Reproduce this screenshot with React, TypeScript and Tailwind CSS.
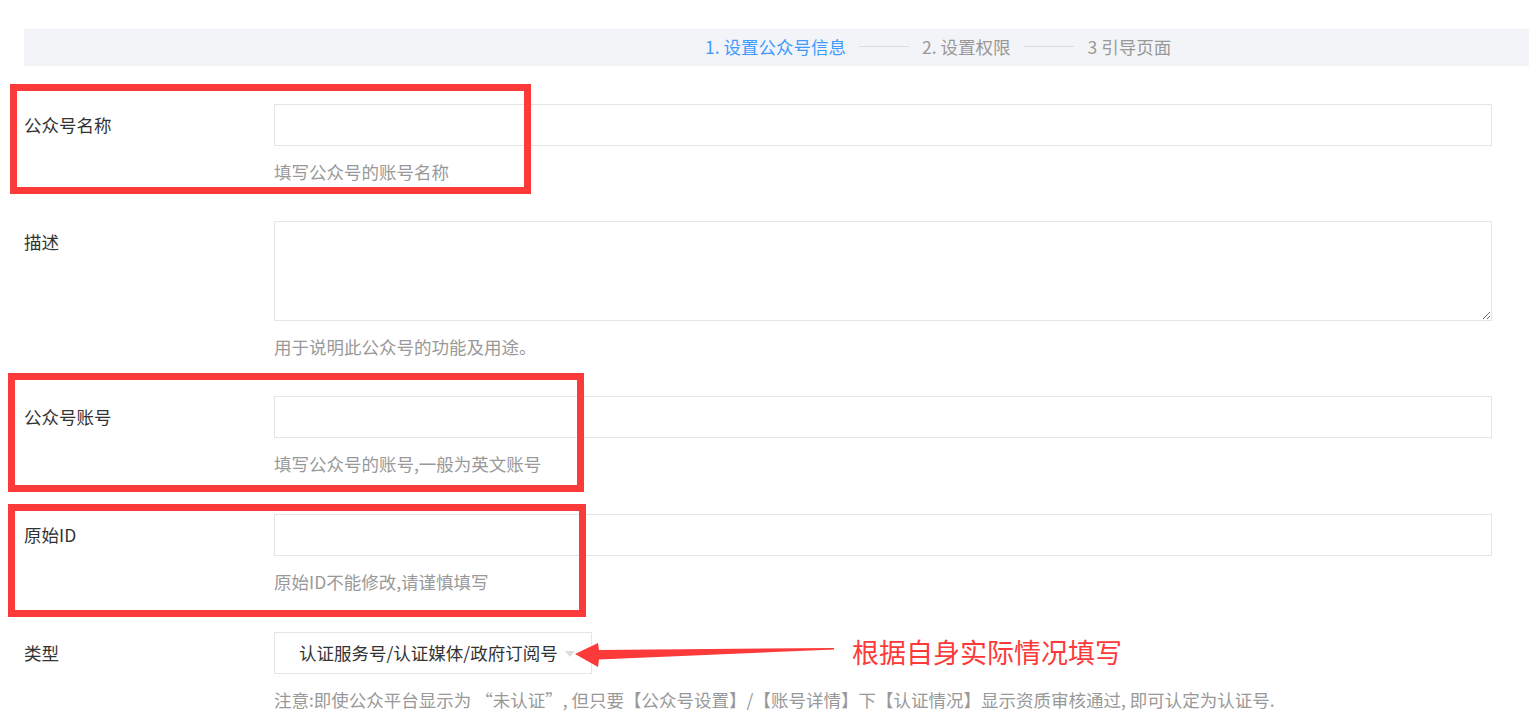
import React from "react"

const fields = [
  { label: "公众号名称", help: "填写公众号的账号名称", gap: "mb-[39px]" },
  { label: "描述", help: "用于说明此公众号的功能及用途。", multiline: true, gap: "mb-[39px]" },
  { label: "公众号账号", help: "填写公众号的账号,一般为英文账号", gap: "mb-[40px]" },
  { label: "原始ID", help: "原始ID不能修改,请谨慎填写", gap: "mb-[40px]" },
]

export default function App() {
  return (
    <div className="relative w-[1529px] h-[724px] overflow-hidden bg-white font-['Noto_Sans_CJK_SC',sans-serif] text-[17.5px]">
      {/* steps */}
      <div className="mt-[29px] ml-[24px] h-[37px] bg-[#f3f4f7] flex items-center pl-[681px] leading-[20px] pb-[2px]">
        <span className="text-[#3e9bff]">1. 设置公众号信息</span>
        <span className="mx-[13px] w-[50px] h-px bg-[#dcdcdc]" />
        <span className="text-[#999]">2. 设置权限</span>
        <span className="ml-[13px] mr-[14px] w-[50px] h-px bg-[#dcdcdc]" />
        <span className="text-[#999]">3 引导页面</span>
      </div>

      {/* form */}
      <div className="mt-[38px] px-[24px]">
        {fields.map((f) => (
          <div key={f.label} className={`flex ${f.gap}`}>
            <div className="w-[250px] leading-[42px] text-[#333]">{f.label}</div>
            <div className="w-[1218px]">
              {f.multiline ? (
                <textarea className="block w-full h-[100px] border border-[#e5e5e5] outline-none" />
              ) : (
                <input className="block w-full h-[42px] border border-[#e5e5e5] outline-none" />
              )}
              <p className="mt-[16px] leading-[20px] text-[#999]">{f.help}</p>
            </div>
          </div>
        ))}

        <div className="flex">
          <div className="w-[250px] leading-[42px] text-[#333]">类型</div>
          <div>
            <div className="flex items-center w-[318px] h-[42px] border border-[#e5e5e5] pl-[24px] text-[#333]">
              <span>认证服务号/认证媒体/政府订阅号</span>
              <span className="ml-[7px] mt-[2px] w-0 h-0 border-l-[5.5px] border-r-[5.5px] border-t-[6px] border-l-transparent border-r-transparent border-t-[#dddddd]" />
            </div>
            <p className="mt-[16px] leading-[20px] text-[#999] whitespace-nowrap">
              注意:即使公众平台显示为 “未认证”, 但只要【公众号设置】/【账号详情】下【认证情况】显示资质审核通过, 即可认定为认证号.
            </p>
          </div>
        </div>
      </div>

      {/* annotations */}
      <div className="absolute left-[10px] top-[84px] w-[521px] h-[110px] border-[7px] border-[#fc3a3a]" />
      <div className="absolute left-[8px] top-[373px] w-[576px] h-[119px] border-[7px] border-[#fc3a3a]" />
      <div className="absolute left-[8px] top-[504px] w-[578px] h-[113px] border-[7px] border-[#fc3a3a]" />

      <svg className="absolute left-[570px] top-[640px]" width="270" height="32" viewBox="0 0 270 32">
        <polygon points="5,14 28,3 29,10 264,8 264,9.4 29,19.5 28,27" fill="#fc3a3a" />
      </svg>
      <div className="absolute left-[852px] top-[634px] text-[27px] leading-[36px] text-[#fc3a3a]">根据自身实际情况填写</div>
    </div>
  )
}
